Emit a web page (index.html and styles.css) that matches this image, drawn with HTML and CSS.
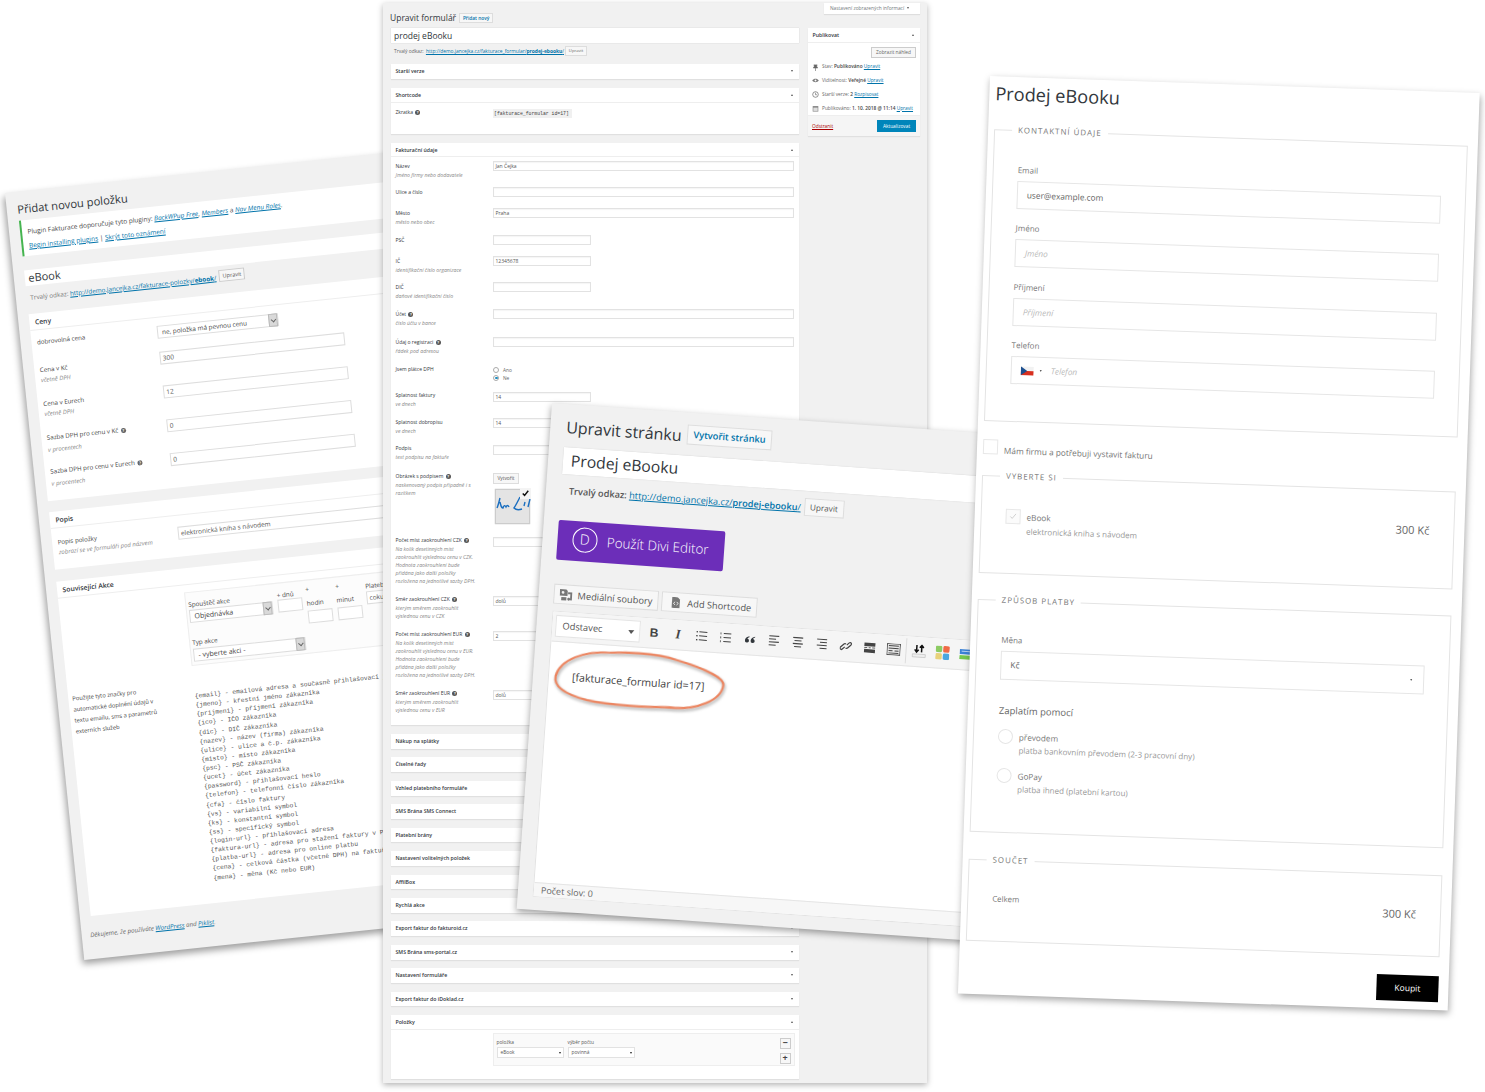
FILE: index.html
```html
<!DOCTYPE html>
<html lang="cs">
<head>
<meta charset="utf-8">
<title>Fakturace</title>
<link rel="stylesheet" href="styles.css">
</head>
<body>
<main class="stage">

<section class="win win-a">
  <h1 class="a-title">Přidat novou položku</h1>
  <div class="a-notice">
    <p>Plugin Fakturace doporučuje tyto pluginy: <a><i>BackWPup Free</i></a>, <a><i>Members</i></a> a <a><i>Nav Menu Roles</i></a>.</p>
    <p><a>Begin installing plugins</a> | <a>Skrýt toto oznámení</a></p>
  </div>
  <div class="a-name">eBook</div>
  <div class="a-perm"><span>Trvalý odkaz: <a>http://demo.jancejka.cz/fakturace-polozky/<b>ebook</b>/</a></span><span class="a-btn">Upravit</span></div>

  <div class="a-box a-ceny">
    <h2 class="a-h">Ceny</h2>
    <div class="a-row a-row-sel">
      <div class="a-lab">dobrovolná cena</div>
      <div class="a-sel a-sel-price">ne, položka má pevnou cenu<span class="a-selarr"></span></div>
    </div>
    <div class="a-row">
      <div class="a-lab">Cena v Kč<small>včetně DPH</small></div>
      <div class="a-in">300</div>
    </div>
    <div class="a-row">
      <div class="a-lab">Cena v Eurech<small>včetně DPH</small></div>
      <div class="a-in">12</div>
    </div>
    <div class="a-row">
      <div class="a-lab">Sazba DPH pro cenu v Kč <span class="q"></span><small class="a-far">v procentech</small></div>
      <div class="a-in">0</div>
    </div>
    <div class="a-row">
      <div class="a-lab">Sazba DPH pro cenu v Eurech <span class="q"></span><small class="a-far">v procentech</small></div>
      <div class="a-in">0</div>
    </div>
  </div>

  <div class="a-box a-popis">
    <h2 class="a-h">Popis</h2>
    <div class="a-row a-row-popis">
      <div class="a-lab">Popis položky<small>zobrazí se ve formuláři pod názvem</small></div>
      <div class="a-in a-in-dark">elektronická kniha s návodem</div>
    </div>
  </div>

  <div class="a-box a-akce">
    <h2 class="a-h">Související Akce</h2>
    <div class="a-act">
      <div class="a-act-row">
        <div class="a-col a-col-1"><label>Spouštěč akce</label><div class="a-sel a-sel-w84">Objednávka<span class="a-selarr"></span></div></div>
        <div class="a-col a-col-2"><label>+ dnů</label><div class="a-in a-in-s"></div></div>
        <div class="a-col a-col-3"><label>+</label><label>hodin</label><div class="a-in a-in-s"></div></div>
        <div class="a-col a-col-3"><label>+</label><label>minut</label><div class="a-in a-in-s"></div></div>
        <div class="a-col a-col-5"><label>Platební brána</label><div class="a-in a-in-s">coku</div></div>
      </div>
      <div class="a-col a-col-typ"><label>Typ akce</label><div class="a-sel a-sel-w113">- vyberte akci -<span class="a-selarr"></span></div></div>
    </div>
    <div class="a-usage">
      <p class="a-usage-l">Použijte tyto značky pro automatické doplnění údajů v textu emailu, sms a parametrů externích služeb</p>
      <pre class="a-code">{email} - emailová adresa a současně přihlašovací jméno
{jmeno} - křestní jméno zákazníka
{prijmeni} - příjmení zákazníka
{ico} - IČO zákazníka
{dic} - DIČ zákazníka
{nazev} - název (firma) zákazníka
{ulice} - ulice a č.p. zákazníka
{misto} - místo zákazníka
{psc} - PSČ zákazníka
{ucet} - účet zákazníka
{password} - přihlašovací heslo
{telefon} - telefonní číslo zákazníka
{cfa} - číslo faktury
{vs} - variabilní symbol
{ks} - konstantní symbol
{ss} - specifický symbol
{login-url} - přihlašovací adresa
{faktura-url} - adresa pro stažení faktury v PDF
{platba-url} - adresa pro online platbu
{cena} - celková částka (včetně DPH) na faktuře
{mena} - měna (Kč nebo EUR)</pre>
    </div>
  </div>
  <p class="a-foot"><i>Děkujeme, že používáte <a>WordPress</a> and <a>Piklist</a>.</i></p>
</section>

<section class="win win-b">
  <div class="b-tabs"><div class="b-tab">Nastavení zobrazených informací <span class="arr-d"></span></div></div>
  <div class="b-head"><h1>Upravit formulář</h1><span class="b-new">Přidat nový</span></div>
  <div class="b-cols">
    <div class="b-main">
      <div class="b-name">prodej eBooku</div>
      <div class="b-perm">Trvalý odkaz: <a>http://demo.jancejka.cz/fakturace_formular/<b>prodej-ebooku</b>/</a><span class="b-btn">Upravit</span></div>

      <div class="b-box b-box-first"><div class="b-h">Starší verze<span class="arr-d"></span></div></div>

      <div class="b-box b-short">
        <div class="b-h b-h-open">Shortcode<span class="arr-u"></span></div>
        <div class="b-row"><div class="b-lab">Zkratka <span class="q q-b"></span></div><code class="b-code">[fakturace_formular id=17]</code></div>
      </div>

      <div class="b-box b-fak">
        <div class="b-h b-h-open">Fakturační údaje<span class="arr-u"></span></div>
        <div class="b-rows">
          <div class="b-row rh26"><div class="b-lab">Název<small>Jméno firmy nebo dodavatele</small></div><div class="b-in">Jan Čejka</div></div>
          <div class="b-row rh21"><div class="b-lab">Ulice a číslo</div><div class="b-in"></div></div>
          <div class="b-row rh26"><div class="b-lab">Město<small>město nebo obec</small></div><div class="b-in">Praha</div></div>
          <div class="b-row rh21"><div class="b-lab">PSČ</div><div class="b-in b-in-s"></div></div>
          <div class="b-row rh26"><div class="b-lab">IČ<small>identifikační číslo organizace</small></div><div class="b-in b-in-s">12345678</div></div>
          <div class="b-row rh27"><div class="b-lab">DIČ<small>daňové identifikační číslo</small></div><div class="b-in b-in-s"></div></div>
          <div class="b-row rh28"><div class="b-lab">Účet <span class="q q-b"></span><small>číslo účtu v bance</small></div><div class="b-in"></div></div>
          <div class="b-row rh29"><div class="b-lab">Údaj o registraci <span class="q q-b"></span><small>řádek pod adresou</small></div><div class="b-in"></div></div>
          <div class="b-row rh26"><div class="b-lab b-lab-up">Jsem plátce DPH</div><div class="b-radios"><div class="b-rad"><span class="b-dot"></span>Ano</div><div class="b-rad"><span class="b-dot b-dot-on"></span>Ne</div></div></div>
          <div class="b-row rh26"><div class="b-lab b-lab-up">Splatnost faktury<small>ve dnech</small></div><div class="b-in b-in-s">14</div></div>
          <div class="b-row rh26"><div class="b-lab b-lab-up">Splatnost dobropisu<small>ve dnech</small></div><div class="b-in b-in-s">14</div></div>
          <div class="b-row rh28"><div class="b-lab b-lab-up">Podpis<small>text podpisu na faktuře</small></div><div class="b-in b-in-s"></div></div>
          <div class="b-row rh64"><div class="b-lab b-lab-up">Obrázek s podpisem <span class="q q-b"></span><small>naskenovaný podpis případně i s<br>razítkem</small></div>
            <div class="b-sigcol"><span class="b-create">Vytvořit</span>
              <div class="b-sig">
                <svg viewBox="0 0 35 35" width="35" height="35" aria-hidden="true"><path d="M4 8C3 12 2 16 1 18M4 12c1 4 1 6 3 6 1-3 2-3 3-1 1-2 2-2 3 0M24 7c-2 4-4 8-6 11 2 2 5 2 8 1M29 12l-1 4M34 9l-2 8" fill="none" stroke="#1b6fc0" stroke-width="1.400"/></svg>
                <span class="b-sigck"><svg viewBox="0 0 12 12" width="11" height="11" aria-hidden="true"><path d="M3 6l2 2 4-5" fill="none" stroke="#111" stroke-width="1.600"/></svg></span>
              </div>
            </div>
          </div>
          <div class="b-row rh59"><div class="b-lab b-lab-up">Počet míst zaokrouhlení CZK <span class="q q-b"></span><small>Na kolik desetinných míst<br>zaokrouhlit výslednou cenu v CZK.<br>Hodnota zaokrouhlení bude<br>přidána jako další položky<br>rozložena na jednotlivé sazby DPH.</small></div><div class="b-in b-in-s"></div></div>
          <div class="b-row rh35"><div class="b-lab b-lab-up">Směr zaokrouhlení CZK <span class="q q-b"></span><small>kterým směrem zaokrouhlit<br>výslednou cenu v CZK</small></div><div class="b-in b-in-s">dolů</div></div>
          <div class="b-row rh59"><div class="b-lab b-lab-up">Počet míst zaokrouhlení EUR <span class="q q-b"></span><small>Na kolik desetinných míst<br>zaokrouhlit výslednou cenu v EUR.<br>Hodnota zaokrouhlení bude<br>přidána jako další položky<br>rozložena na jednotlivé sazby DPH.</small></div><div class="b-in b-in-s">2</div></div>
          <div class="b-row rh36"><div class="b-lab b-lab-up">Směr zaokrouhlení EUR <span class="q q-b"></span><small>kterým směrem zaokrouhlit<br>výslednou cenu v EUR</small></div><div class="b-in b-in-s">dolů</div></div>
        </div>
      </div>

      <div class="b-box"><div class="b-h">Nákup na splátky<span class="arr-d"></span></div></div>
      <div class="b-box"><div class="b-h">Číselné řady<span class="arr-d"></span></div></div>
      <div class="b-box"><div class="b-h">Vzhled platebního formuláře<span class="arr-d"></span></div></div>
      <div class="b-box"><div class="b-h">SMS Brána SMS Connect<span class="arr-d"></span></div></div>
      <div class="b-box"><div class="b-h">Platební brány<span class="arr-d"></span></div></div>
      <div class="b-box"><div class="b-h">Nastavení volitelných položek<span class="arr-d"></span></div></div>
      <div class="b-box"><div class="b-h">AffilBox<span class="arr-d"></span></div></div>
      <div class="b-box"><div class="b-h">Rychlá akce<span class="arr-d"></span></div></div>
      <div class="b-box"><div class="b-h">Export faktur do fakturoid.cz<span class="arr-d"></span></div></div>
      <div class="b-box"><div class="b-h">SMS Brána sms-portal.cz<span class="arr-d"></span></div></div>
      <div class="b-box"><div class="b-h">Nastavení formuláře<span class="arr-d"></span></div></div>
      <div class="b-box"><div class="b-h">Export faktur do iDoklad.cz<span class="arr-d"></span></div></div>
      <div class="b-box b-items">
        <div class="b-h b-h-open">Položky<span class="arr-u"></span></div>
        <div class="b-item-wrap">
          <div class="b-item">
            <div class="b-item-col"><label>položka</label><div class="b-item-sel">eBook<span class="arr-d"></span></div></div>
            <div class="b-item-col"><label>výběr počtu</label><div class="b-item-sel">povinná<span class="arr-d"></span></div></div>
            <div class="b-item-btns"><span class="b-pm">−</span><span class="b-pm">+</span></div>
          </div>
        </div>
      </div>
    </div>

    <aside class="b-side">
      <div class="b-h b-h-open">Publikovat<span class="arr-u"></span></div>
      <div class="b-preview"><span>Zobrazit náhled</span></div>
      <ul class="b-meta">
        <li><svg viewBox="0 0 8 8" width="7" height="7" aria-hidden="true"><path d="M2 1h4M2.500 1v2L1.500 4.500h5L5.500 3V1M4 4.500V8" fill="#666" stroke="#666" stroke-width=".7"/></svg><span>Stav: <b>Publikováno</b> <a>Upravit</a></span></li>
        <li><svg viewBox="0 0 8 8" width="7" height="7" aria-hidden="true"><path d="M.3 4C2 1.500 6 1.500 7.700 4 6 6.500 2 6.500.3 4z" fill="#777"/><circle cx="4" cy="4" r="1.100" fill="#fff"/></svg><span>Viditelnost: <b>Veřejné</b> <a>Upravit</a></span></li>
        <li><svg viewBox="0 0 8 8" width="7" height="7" aria-hidden="true"><circle cx="4" cy="4" r="3.200" fill="none" stroke="#666" stroke-width=".8"/><path d="M4 2v2.300h1.800" fill="none" stroke="#666" stroke-width=".7"/></svg><span>Starší verze: <b>2</b> <a>Rozpisovat</a></span></li>
        <li><svg viewBox="0 0 8 8" width="7" height="7" aria-hidden="true"><path d="M.8 1.200h6.400v6.300H.8z" fill="#888"/><path d="M1.500 3h5v3.800h-5z" fill="#ddd"/></svg><span>Publikováno: <b>1. 10. 2018 @ 11:14</b> <a>Upravit</a></span></li>
      </ul>
      <div class="b-pub"><a class="b-del">Odstranit</a><span class="b-update">Aktualizovat</span></div>
    </aside>
  </div>
</section>

<section class="win win-c">
  <div class="c-head"><h1>Upravit stránku</h1><span class="c-new">Vytvořit stránku</span></div>
  <div class="c-name">Prodej eBooku</div>
  <div class="c-perm"><span><b>Trvalý odkaz:</b> <a>http://demo.jancejka.cz/<b>prodej-ebooku</b>/</a></span><span class="c-btn">Upravit</span></div>
  <div class="c-divi">
    <span class="c-divi-d">D</span><span>Použít Divi Editor</span>
  </div>
  <div class="c-media">
    <span class="c-mbtn c-mbtn-1"><svg viewBox="0 0 14 14" width="13" height="13" aria-hidden="true"><path d="M0 1h7l1.500 1.500V8H0z" fill="#777"/><circle cx="3.500" cy="4.500" r="1.500" fill="#f1f1f1"/><path d="M9 4h4.500v8.500H11a1.500 1.500 0 1 1 .5-1.200V6H9zM2 9.500h5.500V13H2z" fill="#777"/></svg>Mediální soubory</span>
    <span class="c-mbtn c-mbtn-2"><svg viewBox="0 0 14 14" width="11" height="11" aria-hidden="true"><path d="M2 0h7l3 3v11H2z" fill="#777"/><path d="M6 6L4 8l2 2M8 6l2 2-2 2" fill="none" stroke="#fff" stroke-width="1"/></svg>Add Shortcode</span>
  </div>
  <div class="c-editor">
    <div class="c-bar">
      <div class="c-select">Odstavec<span class="c-caret"></span></div>
      <span class="c-ic c-b">B</span>
      <span class="c-ic c-i">I</span>
      <span class="c-ic"><svg viewBox="0 0 12 12" width="12" height="12" aria-hidden="true"><path d="M3 2h8M3 6h8M3 10h8" stroke="#444" stroke-width="1"/><path d="M0 2h1.500M0 6h1.500M0 10h1.500" stroke="#444" stroke-width="1.400"/></svg></span>
      <span class="c-ic"><svg viewBox="0 0 12 12" width="12" height="12" aria-hidden="true"><path d="M3.500 2H11M3.500 6H11M3.500 10H11" stroke="#444" stroke-width="1"/><path d="M.5 1v2M.5 5v2M.5 9v2" stroke="#777" stroke-width="1.400"/></svg></span>
      <span class="c-ic"><svg viewBox="0 0 12 12" width="12" height="12" aria-hidden="true"><path d="M5.300 3C3 3.600 1 5 1 7.300a2 2 0 1 0 3.900-.5C4.700 6 4 5.500 3.300 5.600 3.600 4.700 4.400 4 5.300 3.800zM11 3C8.700 3.600 6.700 5 6.700 7.300a2 2 0 1 0 3.900-.5c-.2-.8-.9-1.300-1.600-1.200.3-.9 1.100-1.600 2-1.800z" fill="#32373c"/></svg></span>
      <span class="c-ic"><svg viewBox="0 0 12 12" width="12" height="12" aria-hidden="true"><path d="M1 1h10M1 4h7M1 7h10M1 10h7" stroke="#444" stroke-width="1.100"/></svg></span>
      <span class="c-ic"><svg viewBox="0 0 12 12" width="12" height="12" aria-hidden="true"><path d="M1 1h10M2.500 4h7M1 7h10M2.500 10h7" stroke="#444" stroke-width="1.100"/></svg></span>
      <span class="c-ic"><svg viewBox="0 0 12 12" width="12" height="12" aria-hidden="true"><path d="M1 1h10M4 4h7M1 7h10M4 10h7" stroke="#444" stroke-width="1.100"/></svg></span>
      <span class="c-ic"><svg viewBox="0 0 12 12" width="12" height="12" aria-hidden="true"><path d="M5 7l-2.500 2.500a1.400 1.400 0 0 1-2-2L4 4a1.400 1.400 0 0 1 2 0M7 5l2.500-2.500a1.400 1.400 0 0 1 2 2L8 8a1.400 1.400 0 0 1-2 0" transform="translate(.3 .2) scale(.95)" fill="none" stroke="#444" stroke-width="1.300"/></svg></span>
      <span class="c-ic"><svg viewBox="0 0 12 12" width="12" height="12" aria-hidden="true"><path d="M.5 1h11v3.500H.5zM.5 7.500h11V11H.5z" fill="#444"/><path d="M.5 6h3M5 6h2M8.500 6h3" stroke="#444" stroke-width=".8"/></svg></span>
      <span class="c-ic"><svg viewBox="0 0 14 12" width="14" height="12" aria-hidden="true"><path d="M.5.500h13v11H.5z" fill="#e9e9e9" stroke="#555"/><path d="M2 2.500h10M2 5h10M2 7.500h4M8 7.500h4M2 9.800h10" stroke="#444" stroke-width="1"/></svg></span>
      <span class="c-sep"></span>
      <span class="c-ic c-ic-w"><svg viewBox="0 0 15 14" width="15" height="14" aria-hidden="true"><path d="M1 10h13v3H1z" fill="#eee" stroke="#bbb" stroke-width=".6"/><path d="M5 1v7M3 5.500L5 8l2-2.500M10 8V1M8 3.500L10 1l2 2.500" fill="none" stroke="#111" stroke-width="1.500"/></svg></span>
      <span class="c-ic c-ic-w"><svg viewBox="0 0 14 14" width="14" height="14" aria-hidden="true"><rect x="0" y="0" width="6.500" height="6.500" rx="1.500" fill="#8ccb63"/><rect x="7.500" y="0" width="6.500" height="6.500" rx="1.500" fill="#ef6a45"/><rect x="0" y="7.500" width="6.500" height="6.500" rx="1.500" fill="#e8d27a"/><rect x="7.500" y="7.500" width="6.500" height="6.500" rx="1.500" fill="#4aa7e0"/></svg></span>
      <span class="c-ic c-ic-w"><svg viewBox="0 0 14 12" width="14" height="12" aria-hidden="true"><path d="M0 1h14v5H0z" fill="#3b82d6"/><path d="M0 7h14v4H0z" fill="#76c850"/><path d="M2 3h10" stroke="#cfe3fa" stroke-width=".8"/></svg></span>
    </div>
    <div class="c-body"><p>[fakturace_formular id=17]</p></div>
    <div class="c-status">Počet slov: 0</div>
  </div>
  <svg class="c-ring" viewBox="0 0 220 320" width="220" height="320" aria-hidden="true"><path d="M22.700 272C26 255 50 245 75.300 245 100 243 125 243 142.300 247.700 170 254 191 262 190.600 269.300 190 285 165 297 138.900 295.400 110 297 80 298 55.300 293.900 35 290 21 283 22.700 272z" fill="none" stroke="#ec8560" stroke-width="2.200"/></svg>
</section>

<section class="win win-d">
  <h1 class="d-title">Prodej eBooku</h1>

  <div class="fs fs-1">
    <span class="fs-leg">KONTAKTNÍ ÚDAJE</span>
    <div class="d-field"><label>Email</label><div class="d-in">user@example.com</div></div>
    <div class="d-field"><label>Jméno</label><div class="d-in d-ph">Jméno</div></div>
    <div class="d-field"><label>Příjmení</label><div class="d-in d-ph">Příjmení</div></div>
    <div class="d-field"><label>Telefon</label>
      <div class="d-in d-ph d-tel">
        <svg viewBox="0 0 13 9" width="13" height="9" aria-hidden="true"><path d="M0 0h13v4.500H0z" fill="#f2f2f2"/><path d="M0 4.500h13V9H0z" fill="#d7301f"/><path d="M0 0l6.500 4.500L0 9z" fill="#1c4f8f"/></svg>
        <span class="d-telcaret"></span><span>Telefon</span>
      </div>
    </div>
  </div>

  <div class="d-firm"><span class="d-check"></span><span>Mám firmu a potřebuji vystavit fakturu</span></div>

  <div class="fs fs-2">
    <span class="fs-leg fs-leg-s">VYBERTE SI</span>
    <div class="d-prod">
      <span class="d-check d-check-on"><svg viewBox="0 0 12 12" width="11" height="11" aria-hidden="true"><path d="M3 6l2 2 4-5" fill="none" stroke="#ccc" stroke-width="1"/></svg></span>
      <div class="d-prod-t"><div class="d-t1">eBook</div><div class="d-t2">elektronická kniha s návodem</div></div>
      <div class="d-price">300 Kč</div>
    </div>
  </div>

  <div class="fs fs-3">
    <span class="fs-leg">ZPŮSOB PLATBY</span>
    <div class="d-field"><label>Měna</label><div class="d-in d-sel">Kč<span class="d-selcaret"></span></div></div>
    <h3 class="d-pay">Zaplatím pomocí</h3>
    <div class="d-radio"><span class="d-rad"></span><div class="d-prod-t"><div class="d-t1">převodem</div><div class="d-t2">platba bankovním převodem (2-3 pracovní dny)</div></div></div>
    <div class="d-radio"><span class="d-rad"></span><div class="d-prod-t"><div class="d-t1">GoPay</div><div class="d-t2">platba ihned (platební kartou)</div></div></div>
  </div>

  <div class="fs fs-4">
    <span class="fs-leg fs-leg-s">SOUČET</span>
    <div class="d-sum"><label>Celkem</label><div class="d-price">300 Kč</div></div>
  </div>

  <div class="d-buy"><span class="d-koupit">Koupit</span></div>
</section>

</main>
</body>
</html>
```
FILE: styles.css
```css
* { box-sizing: border-box; }
html, body { margin: 0; padding: 0; background: #fff; }
body { font-family: "Open Sans", "Liberation Sans", sans-serif; color: #444; }
h1, h2, h3, p, ul { margin: 0; padding: 0; font-weight: 400; }
a { color: #0073aa; text-decoration: underline; }
small { display: block; }

.stage { position: relative; width: 1485px; height: 1092px; overflow: hidden; }
.win { position: absolute; transform-origin: 0 0; }

/* help bubble */
.q { display: inline-block; width: 5px; height: 5px; border-radius: 50%; background: #666; vertical-align: 0; margin-left: 1px; color: #fff; font-size: 4px; line-height: 5px; text-align: center; font-weight: 700; font-style: normal; }
.q::before { content: "?"; display: block; }
.q-b { background: #555; }

/* WINDOW A */
.win-a {
  left: 5px; top: 193px; width: 640px; height: 771px;
  transform: rotate(-6deg) skewX(-.1deg);
  background: #f1f1f1;
  box-shadow: -2px 4px 7px rgba(0,0,0,.38);
  padding-left: 10.5px;
  font-size: 6.3px;
  line-height: 10px;
}
.a-title { font-size: 11.2px; line-height: 16px; padding-top: 10px; height: 29px; color: #32373c; }
.a-notice { height: 35.5px; background: #fff; border-left: 2px solid #46b450; padding: 5px 0 0 6px; font-size: 6.5px; line-height: 14px; color: #444; }
.a-name { margin-top: 14.5px; height: 16px; background: #fff; font-size: 11px; line-height: 16px; padding-left: 4px; color: #32373c; }
.a-perm { height: 28px; display: flex; align-items: flex-start; gap: 3px; padding: 4px 0 0 4px; color: #777; }
.a-perm span:first-child { padding-top: 3px; }
.a-btn { height: 12px; width: 26px; border: 1px solid #ccc; background: #f7f7f7; font-size: 5.5px; line-height: 10px; text-align: center; color: #555; }
.a-box { background: #fff; }
.a-ceny { height: 188px; }
.a-popis { height: 58px; margin-top: 11px; }
.a-akce { height: 336px; margin-top: 12px; }
.a-h { height: 17px; font-size: 6.8px; line-height: 18px; font-weight: 600; padding-left: 6px; color: #32373c; border-bottom: 1px solid #eee; }
.a-row { display: grid; grid-template-columns: 126.5px 186px; height: 34px; }
.a-row-sel { height: 34px; padding-top: 8px; }
.a-row-popis { height: 30px; padding-top: 11px; }
.a-lab { padding: 0 0 0 6px; margin-top: .5px; font-size: 6.2px; font-weight: 500; color: #444; }
.a-row-sel .a-lab { margin-top: -1px; }
.a-row-popis .a-lab { margin-top: -2px; }
.a-lab small { font-size: 6px; font-weight: 400; font-style: italic; color: #888; }
.a-lab .a-far { margin-top: 2px; }
.a-in { height: 13px; background: #fff; border: 1px solid #ddd; font-size: 6.5px; line-height: 11px; padding-left: 2px; color: #555; }
.a-in-dark { width: 290px; }
.a-sel { position: relative; height: 13px; border: 1px solid #ddd; background: #fff; font-size: 7px; line-height: 11px; padding-left: 4px; color: #444; }
.a-sel-price { width: 122px; font-size: 6.4px; }
.a-sel-w84 { width: 84px; }
.a-sel-w113 { width: 113px; }
.a-selarr { position: absolute; right: 0; top: -1px; width: 9px; height: 13px; background: #d9d9d9; border: 1px solid #bbb; }
.a-selarr::after { content: ""; position: absolute; left: 2px; top: 3px; width: 3px; height: 3px; border-right: 1px solid #666; border-bottom: 1px solid #666; transform: rotate(45deg); }
.a-act { margin: 7px 0 0 126.5px; height: 74px; width: 300px; background: #fcfcfc; border: 1px solid #eee; padding: 4px 0 0 2px; position: relative; }
.a-act-row { display: flex; height: 37px; }
.a-col label { display: block; font-size: 6.3px; line-height: 9px; font-weight: 500; color: #444; }
.a-col-1 { width: 89px; padding-top: 3px; }
.a-col-1 label { height: 10px; }
.a-col-2 { width: 29px; padding-top: 3px; }
.a-col-3 { width: 30px; }
.a-col-3 label + label { margin-top: 5px; margin-bottom: 3px; }
.a-col-5 { width: 30px; padding-top: 3px; white-space: nowrap; }
.a-col-5 label { height: 10px; }
.a-in-s { width: 25px; height: 13px; }
.a-col-typ { padding-top: 4px; }
.a-col-typ label { height: 11px; }
.a-usage { display: grid; grid-template-columns: 126.5px 1fr; margin-top: 15px; }
.a-usage-l { padding-left: 4.5px; padding-right: 32px; font-size: 5.8px; line-height: 11px; font-weight: 500; color: #444; }
.a-code { margin: 11px 0 0; font-family: "Liberation Mono", monospace; font-size: 6.3px; line-height: 9.13px; color: #555; white-space: pre; }
.a-foot { margin: 14px 0 0 -2px; font-size: 6.2px; color: #666; }

/* WINDOW B */
.win-b {
  left: 383px; top: 3px; width: 544px; height: 1080px;
  background: #f1f1f1;
  box-shadow: 0 2px 6px rgba(0,0,0,.3);
  padding: 0 7px 0 8px;
  font-size: 5.2px;
  line-height: 8px;
}
.b-tabs { display: flex; justify-content: flex-end; height: 11px; }
.b-tab { width: 96px; height: 11px; background: #fff; font-size: 4.8px; line-height: 10px; padding-left: 6px; color: #72777c; box-shadow: 0 1px 1px rgba(0,0,0,.08); }
.b-tab .arr-d { position: static; display: inline-block; margin: 0 0 1px 2px; }
.b-head { display: flex; align-items: center; gap: 3px; height: 14px; margin-top: -3px; }
.b-head h1 { font-size: 8.5px; line-height: 12px; color: #32373c; margin-left: -1px; }
.b-new { width: 34px; height: 10px; background: #f7f7f7; border: 1px solid #ddd; font-size: 4.8px; font-weight: 600; line-height: 8px; text-align: center; color: #0073aa; }
.b-cols { display: flex; gap: 9px; margin-top: 3px; }
.b-main { width: 408px; }
.b-name { height: 15px; background: #fff; font-size: 8.5px; line-height: 15px; padding-left: 3px; color: #32373c; box-shadow: 0 0 1px rgba(0,0,0,.2); }
.b-perm { height: 21px; display: flex; align-items: flex-start; padding: 4px 0 0 3px; color: #666; font-size: 4.9px; white-space: pre; }
.b-perm a { margin-left: 1px; }
.b-btn { display: block; width: 22px; height: 10px; margin: -1px 0 0 1px; background: #f7f7f7; border: 1px solid #ddd; text-align: center; line-height: 8px; font-size: 4.2px; }
.b-box { background: #fff; margin-bottom: 8.75px; box-shadow: 0 1px 1px rgba(0,0,0,.07); }
.b-box-first { margin-bottom: 9.3px; }
.b-short { height: 46px; margin-bottom: 8.6px; }
.b-fak { height: 582px; margin-bottom: 9.4px; }
.b-h { position: relative; height: 14.7px; line-height: 14.7px; padding-left: 4.5px; font-size: 5.2px; font-weight: 600; color: #32373c; }
.b-h-open { border-bottom: 1px solid #eee; }
.arr-d, .arr-u { position: absolute; right: 6px; top: 6px; width: 0; height: 0; border-left: 1.5px solid transparent; border-right: 1.5px solid transparent; }
.arr-d { border-top: 2px solid #555; }
.arr-u { border-bottom: 2px solid #555; }
.b-short .b-row { padding-top: 4px; }
.b-row { display: grid; grid-template-columns: 97.5px 1fr; padding-left: 4.5px; }
.b-lab { font-size: 5px; font-weight: 500; line-height: 10px; color: #32373c; white-space: nowrap; }
.b-lab-up { margin-top: -1.5px; }
.b-lab small { font-size: 5.2px; font-weight: 400; font-style: italic; color: #888; line-height: 8px; }
.b-code { font-family: "Liberation Mono", monospace; font-size: 4.8px; line-height: 9px; height: 9px; width: 79px; margin-top: 2.5px; background: #f0f0f0; color: #444; white-space: nowrap; padding-left: 1px; }
.b-rows { padding-top: 3.8px; }
.rh21 { height: 21px; }
.rh26 { height: 26.3px; }
.rh27 { height: 27px; }
.rh28 { height: 28px; }
.rh29 { height: 28.7px; }
.rh35 { height: 35px; }
.rh36 { height: 36px; }
.rh59 { height: 59px; }
.rh64 { height: 64px; }
.b-in { height: 10px; width: 301px; background: #fff; border: 1px solid #e2e2e2; font-size: 5px; line-height: 8px; padding-left: 1.5px; color: #555; box-shadow: inset 0 1px 1px rgba(0,0,0,.04); }
.b-in-s { width: 97.5px; }
.b-radios { font-size: 4.8px; color: #666; line-height: 8px; }
.b-rad { display: flex; align-items: center; gap: 4px; height: 8px; }
.b-dot { width: 6px; height: 6px; border-radius: 50%; border: .6px solid #aaa; background: #fff; position: relative; }
.b-dot-on::after { content: ""; position: absolute; left: 1.2px; top: 1.2px; width: 2.6px; height: 2.6px; border-radius: 50%; background: #1e8cbe; }
.b-sigcol { display: flex; flex-direction: column; align-items: flex-start; }
.b-create { width: 26px; height: 11px; background: #f7f7f7; border: 1px solid #ddd; font-size: 4.8px; line-height: 9px; text-align: center; color: #555; }
.b-sig { position: relative; width: 35px; height: 35px; margin: 5px 0 0 2px; background: #e4e4e4; border: 1px solid #ccc; box-shadow: 0 0 1px rgba(0,0,0,.3); }
.b-sig svg { display: block; }
.b-sigck { position: absolute; right: -2px; top: -2px; width: 11px; height: 11px; background: #f4f4f4; }
.b-items { height: 64px; margin-bottom: 0; }
.b-item-wrap { padding: 3px 4.5px 0 101.5px; }
.b-item { width: 302px; height: 33px; border: 1px solid #eee; background: #fafafa; display: flex; gap: 4px; padding: 4px 3px 0; position: relative; }
.b-item-col { width: 67px; }
.b-item-col label { display: block; font-size: 4.8px; line-height: 9px; color: #555; }
.b-item-sel { position: relative; height: 11px; background: #fff; border: 1px solid #e2e2e2; font-size: 4.8px; line-height: 9px; padding-left: 3px; color: #555; }
.b-item-sel .arr-d { right: 2px; top: 4px; border-top-color: #222; }
.b-item-btns { margin-left: auto; display: flex; flex-direction: column; gap: 4px; }
.b-pm { width: 11px; height: 11px; background: #f7f7f7; border: 1px solid #ccc; font-size: 9px; line-height: 8px; font-weight: 700; text-align: center; color: #444; }
.b-side { width: 112px; height: 108px; background: #fff; position: relative; box-shadow: 0 1px 1px rgba(0,0,0,.07); font-size: 4.8px; }
.b-preview { display: flex; justify-content: flex-end; padding: 4px 4px 0 0; }
.b-preview span { width: 45px; height: 11px; background: #f7f7f7; border: 1px solid #ccc; font-size: 4.8px; line-height: 9px; text-align: center; color: #666; }
.b-meta { list-style: none; margin-top: 2.5px; height: 52px; color: #666; line-height: 13.8px; }
.b-meta li { display: flex; align-items: center; gap: 3.5px; padding-left: 3.5px; height: 13.8px; white-space: nowrap; }
.b-meta b { font-weight: 600; color: #444; }
.b-pub { position: absolute; left: 0; right: 0; bottom: 0; height: 21px; background: #f5f5f5; border-top: 1px solid #eee; display: flex; justify-content: space-between; align-items: center; padding: 0 4px; }
.b-del { color: #a00; }
.b-update { width: 39px; height: 12px; background: #0085ba; color: #fff; text-align: center; line-height: 12px; font-size: 4.8px; }

/* WINDOW C */
.win-c {
  left: 552px; top: 403px; width: 500px; height: 507px;
  transform: rotate(4deg);
  background: #f1f1f1;
  box-shadow: 0 3px 7px rgba(0,0,0,.38);
  padding: 11.5px 0 0 15px;
  font-size: 9.5px;
}
.c-head { display: flex; align-items: flex-start; height: 20px; }
.c-head h1 { font-size: 16px; line-height: 20px; width: 122px; padding-left: 1px; color: #32373c; white-space: nowrap; margin-top: 1px; }
.c-new { width: 85px; height: 20px; background: #f7f7f7; border: 1px solid #ddd; font-size: 9.3px; font-weight: 600; line-height: 18px; text-align: center; color: #0073aa; white-space: nowrap; }
.c-name { margin-top: 11px; height: 27.5px; background: #fff; font-size: 15.7px; line-height: 27px; padding-left: 8px; color: #32373c; box-shadow: 0 0 1px rgba(0,0,0,.2); }
.c-perm { margin-top: 7px; height: 18px; display: flex; align-items: center; gap: 3px; padding-left: 8px; font-size: 9.2px; color: #555; white-space: nowrap; }
.c-perm > span:first-child > b { font-weight: 600; }
.c-perm a b { font-weight: 600; }
.c-btn { width: 40px; height: 18px; background: #f7f7f7; border: 1px solid #ddd; font-size: 8.2px; line-height: 16px; text-align: center; color: #555; }
.c-divi { margin-top: 21px; width: 166.5px; height: 40px; background: #6c2eb9; color: #fff; border-radius: 2px; display: flex; align-items: center; padding: 0 0 3px 15px; gap: 10px; font-size: 13.4px; font-weight: 300; white-space: nowrap; }
.c-divi-d { width: 24.5px; height: 24.5px; border: 1.5px solid #fff; border-radius: 50%; text-align: center; line-height: 21px; font-size: 14px; flex: none; }
.c-media { display: flex; gap: 3px; margin-top: 24px; height: 20px; }
.c-mbtn { display: flex; align-items: center; gap: 5px; height: 20px; background: #f7f7f7; border: 1px solid #ddd; font-size: 9.3px; color: #555; padding-left: 5px; white-space: nowrap; }
.c-mbtn-1 { width: 105px; }
.c-mbtn-2 { width: 95.5px; gap: 6px; padding-left: 8px; }
.c-editor { margin-top: 6.5px; border: 1px solid #e3e3e3; background: #fff; height: 287px; display: flex; flex-direction: column; }
.c-bar { height: 30px; background: #f5f5f5; border-bottom: 1px solid #e5e5e5; display: flex; align-items: center; padding-left: 3px; flex: none; }
.c-select { position: relative; width: 85px; height: 22px; background: #fff; border: 1px solid #e5e5e5; font-size: 9.3px; line-height: 20px; padding-left: 6px; color: #555; margin-right: 2px; flex: none; }
.c-caret { position: absolute; right: 5px; top: 9px; border-left: 3.5px solid transparent; border-right: 3.5px solid transparent; border-top: 4px solid #555; }
.c-ic { width: 24px; flex: none; display: flex; justify-content: center; align-items: center; color: #444; }
.c-ic-w { width: 24px; }
.c-b { font-family: "Liberation Sans", sans-serif; font-size: 12px; font-weight: 700; }
.c-i { font-family: "Liberation Serif", serif; font-size: 13px; font-style: italic; font-weight: 700; }
.c-sep { width: 1px; height: 25px; background: #ddd; flex: none; }
.c-body { flex: 1; padding: 27px 0 0 23px; font-size: 10.7px; color: #444; white-space: nowrap; }
.c-status { height: 14px; background: #f7f7f7; border-top: 1px solid #e5e5e5; font-size: 9px; line-height: 13px; padding-left: 7px; color: #666; flex: none; }
.c-ring { position: absolute; left: 0; top: 0; filter: drop-shadow(1px 2px 1.5px rgba(0,0,0,.35)); }

/* WINDOW D */
.win-d {
  left: 989.5px; top: 75.7px; width: 490px; height: 918px;
  transform: rotate(2deg);
  background: #fff;
  box-shadow: 1px 3px 7px rgba(0,0,0,.35);
  padding: 0 10px 0 6px;
  color: #666;
}
.d-title { height: 53px; padding-top: 5px; font-size: 18.2px; line-height: 24px; color: #32373c; margin-left: 0; }
.fs { position: relative; border: 1px solid #e4e4e4; padding: 0 24px 0 24px; }
.fs-leg { position: absolute; left: 17px; top: -6px; background: #fff; padding: 0 6px; font-size: 7.9px; line-height: 11px; letter-spacing: 1px; color: #777; white-space: nowrap; }
.fs-leg-s { left: 17px; }
.fs-1 { height: 292px; padding-top: 34px; display: flex; flex-direction: column; gap: 14.4px; }
.d-field label { display: block; height: 11px; margin-bottom: 5px; font-size: 8px; line-height: 10px; font-weight: 500; color: #777; }
.d-in { height: 28px; border: 1px solid #e6e6e6; font-size: 8.3px; line-height: 26px; padding-left: 9px; color: #666; }
.d-ph { font-style: italic; color: #bbb; font-size: 8.3px; }
.d-tel { display: flex; align-items: center; padding-left: 9px; }
.d-telcaret { width: 0; height: 0; margin: 0 9px 0 6px; border-left: 1.5px solid transparent; border-right: 1.5px solid transparent; border-top: 2.5px solid #555; }
.d-firm { display: flex; align-items: flex-start; gap: 6px; margin: 17.7px 0 0; height: 36.3px; font-size: 8.3px; line-height: 21px; color: #777; }
.d-check { width: 15px; height: 15px; border: 1px solid #e8e8e8; flex: none; }
.d-check-on { display: flex; align-items: center; justify-content: center; background: #fbfbfb; }
.fs-2 { height: 98px; padding-top: 32px; }
.d-prod { display: flex; align-items: flex-start; gap: 6px; }
.d-prod-t { padding-top: 2px; }
.d-t1 { font-size: 8.2px; line-height: 12px; color: #777; }
.d-t2 { margin-top: 2.5px; font-size: 8px; line-height: 12px; color: #999; white-space: nowrap; }
.d-radio .d-t2 { margin-top: 1px; }
.d-price { margin-left: auto; font-size: 11px; line-height: 14px; color: #666; white-space: nowrap; }
.fs-3 { height: 233px; margin-top: 26px; padding-top: 34px; }
.d-sel { position: relative; height: 29px; }
.d-selcaret { position: absolute; right: 11px; top: 13px; border-left: 1.8px solid transparent; border-right: 1.8px solid transparent; border-top: 2.5px solid #555; }
.d-pay { margin-top: 24px; font-size: 9.5px; line-height: 14px; font-weight: 500; color: #666; }
.d-radio { display: flex; align-items: flex-start; gap: 6px; margin-top: 11px; height: 28px; }
.d-rad { width: 15px; height: 15px; border: 1px solid #e6e6e6; border-radius: 50%; flex: none; }
.fs-4 { height: 82px; margin-top: 27px; padding-top: 33.5px; }
.d-sum { display: flex; align-items: flex-start; }
.d-sum label { font-size: 7.8px; line-height: 10px; font-weight: 500; color: #777; }
.d-sum .d-price { margin-top: -1.5px; }
.d-buy { display: flex; justify-content: flex-end; margin-top: 19px; }
.d-koupit { width: 62px; height: 26.5px; background: #000; color: #fff; font-size: 8.5px; line-height: 26px; text-align: center; }
```
